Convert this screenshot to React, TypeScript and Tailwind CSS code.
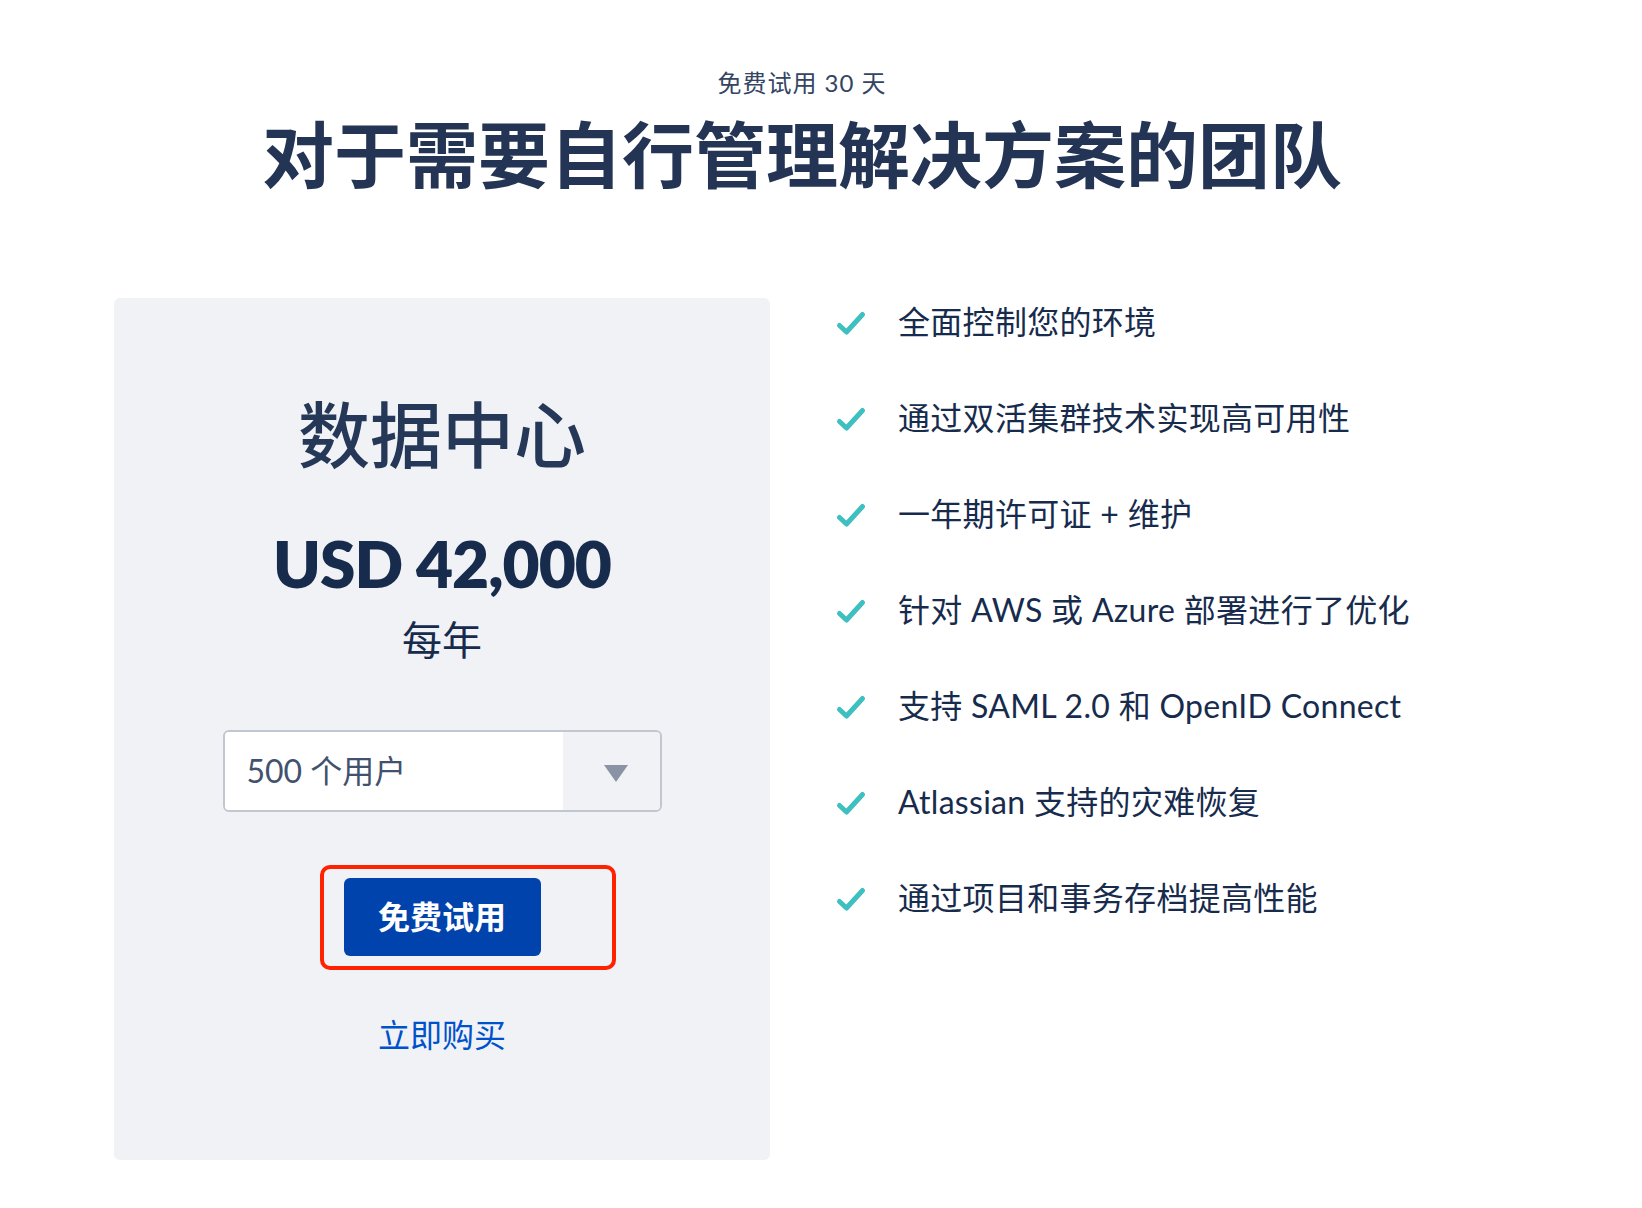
import React from "react";

const features = [
  "全面控制您的环境",
  "通过双活集群技术实现高可用性",
  "一年期许可证 + 维护",
  "针对 AWS 或 Azure 部署进行了优化",
  "支持 SAML 2.0 和 OpenID Connect",
  "Atlassian 支持的灾难恢复",
  "通过项目和事务存档提高性能",
];

function Check() {
  return (
    <svg width="32" height="32" viewBox="0 0 32 32" fill="none" className="shrink-0">
      <path d="M4.5 19.5 L11.5 26 L27.5 8.5" stroke="#3fbfbf" strokeWidth="5" strokeLinecap="round" strokeLinejoin="round" />
    </svg>
  );
}

export default function App() {
  return (
    <div className="min-h-[1208px] w-full bg-white font-['Lato','Noto_Sans_CJK_SC',sans-serif] text-[#172b4d]">
      {/* Header */}
      <div className="pr-[38px] pt-[68px] text-center">
        <p className="text-[24px] leading-[30px] tracking-[1px] text-[#344563]">免费试用 30 天</p>
        <h1 className="mt-[13px] text-[72px] font-bold leading-[86px] text-[#243454]">
          对于需要自行管理解决方案的团队
        </h1>
      </div>

      {/* Pricing + features */}
      <div className="mt-[77px] flex items-start gap-[65px] pl-[114px]">
        <div className="mt-[24px] flex h-[862px] w-[656px] flex-col items-center rounded-[6px] bg-[#f1f2f6] pt-[96px]">
          <h2 className="text-[72px] font-medium leading-[80px] text-[#253858]">数据中心</h2>
          <div className="mt-[50px] text-[64px] font-extrabold leading-[80px] tracking-[-1px] text-[#172b4d]">
            USD 42,000
          </div>
          <div className="mt-[11px] text-[40px] leading-[50px] text-[#172b4d]">每年</div>

          {/* User tier select */}
          <div className="mt-[65px] flex h-[82px] w-[439px] overflow-hidden rounded-[6px] border-2 border-[#c1c7d0]">
            <div className="flex flex-1 items-center bg-white pl-[22px] text-[32px] text-[#42526e]">
              500 个用户
            </div>
            <div className="flex w-[97px] items-center justify-center bg-[#f1f2f6] pl-[10px] pt-[4px]">
              <svg width="24" height="17" viewBox="0 0 24 17">
                <path d="M0 0 H24 L12 17 Z" fill="#8993a4" />
              </svg>
            </div>
          </div>

          {/* Trial button with annotation box */}
          <div className="relative mt-[66px]">
            <button className="h-[78px] w-[197px] rounded-[6px] bg-[#0043ad] text-[32px] font-bold text-white">
              免费试用
            </button>
            <div className="pointer-events-none absolute left-[-24px] top-[-13px] h-[105px] w-[296px] rounded-[10px] border-[4px] border-[#ff2200]" />
          </div>

          <a className="mt-[54px] text-[32px] leading-[50px] text-[#0052cc]">立即购买</a>
        </div>

        <ul className="flex flex-col">
          {features.map((f) => (
            <li key={f} className="flex h-[96px] items-center gap-[31px] text-[32px] tracking-[0.3px] text-[#172b4d]">
              <Check />
              <span>{f}</span>
            </li>
          ))}
        </ul>
      </div>
    </div>
  );
}
